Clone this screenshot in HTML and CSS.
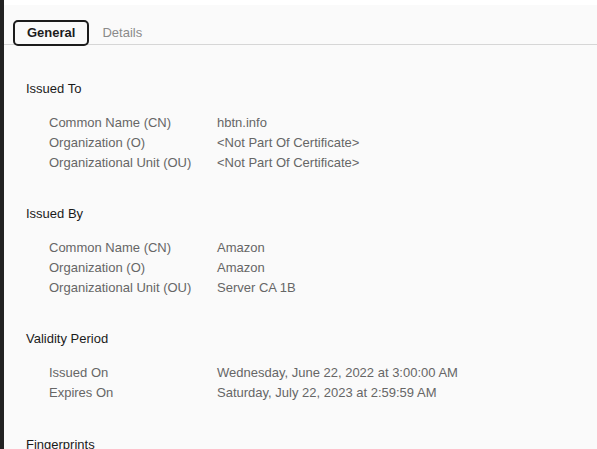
FILE: index.html
```html
<!DOCTYPE html>
<html>
<head>
<meta charset="utf-8">
<link rel="stylesheet" href="styles.css">
</head>
<body>
<div class="dialog">
  <div class="tabbar">
    <div class="tab active">General</div>
    <div class="tab">Details</div>
  </div>
  <div class="content">
    <section class="section">
      <h2 class="heading">Issued To</h2>
      <div class="rows">
        <div class="label">Common Name (CN)</div><div class="value">hbtn.info</div>
        <div class="label">Organization (O)</div><div class="value">&lt;Not Part Of Certificate&gt;</div>
        <div class="label">Organizational Unit (OU)</div><div class="value">&lt;Not Part Of Certificate&gt;</div>
      </div>
    </section>
    <section class="section">
      <h2 class="heading">Issued By</h2>
      <div class="rows">
        <div class="label">Common Name (CN)</div><div class="value">Amazon</div>
        <div class="label">Organization (O)</div><div class="value">Amazon</div>
        <div class="label">Organizational Unit (OU)</div><div class="value">Server CA 1B</div>
      </div>
    </section>
    <section class="section section-wide">
      <h2 class="heading">Validity Period</h2>
      <div class="rows">
        <div class="label">Issued On</div><div class="value">Wednesday, June 22, 2022 at 3:00:00 AM</div>
        <div class="label">Expires On</div><div class="value">Saturday, July 22, 2023 at 2:59:59 AM</div>
      </div>
    </section>
    <section class="section">
      <h2 class="heading">Fingerprints</h2>
    </section>
  </div>
</div>
</body>
</html>
```

FILE: styles.css
```css
html, body {
  margin: 0;
  padding: 0;
  height: 100%;
  overflow: hidden;
}
body {
  background: #222222;
  font-family: "Liberation Sans", Arial, sans-serif;
  font-size: 13px;
  line-height: 20px;
}
.dialog {
  margin-left: 4px;
  min-height: 100%;
  background: #fafafa;
  border-top: 5px solid #ffffff;
}
.tabbar {
  display: flex;
  align-items: flex-start;
  box-sizing: border-box;
  height: 40px;
  padding: 15px 0 0 9px;
  border-bottom: 1px solid #d6d6d6;
}
.tab {
  box-sizing: border-box;
  height: 26px;
  line-height: 22px;
  padding: 0 12px;
  border: 2px solid transparent;
  border-radius: 5px;
  color: #8a8a8a;
}
.tab.active {
  border-color: #1c1c1c;
  background: #fafafa;
  color: #1c1c1c;
  font-weight: bold;
  margin-right: -1px;
}
.content {
  padding: 34px 0 0 22px;
}
.section {
  margin: 0 0 31px 0;
}
.section-wide {
  margin-bottom: 32px;
}
.heading {
  margin: 0;
  font-size: 13px;
  font-weight: normal;
  line-height: 20px;
  color: #1a1a1a;
}
.rows {
  display: grid;
  grid-template-columns: 168px auto;
  margin: 14px 0 0 23px;
  color: #666666;
}
```
